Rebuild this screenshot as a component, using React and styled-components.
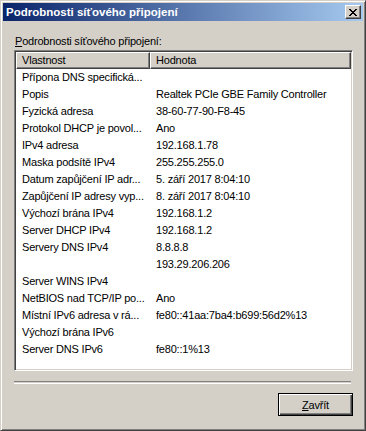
import React from 'react';
import styled, { createGlobalStyle } from 'styled-components';

const GlobalStyle = createGlobalStyle`
  html, body {
    margin: 0;
    padding: 0;
    background: #d4d0c8;
  }
  body {
    font-family: "Liberation Sans", Arial, sans-serif;
    font-size: 11px;
    letter-spacing: -0.2px;
    color: #000;
  }
`;

const Window = styled.div`
  width: 366px;
  height: 431px;
  box-sizing: border-box;
  background: #d4d0c8;
  border: 1px solid;
  border-color: #d4d0c8 #404040 #404040 #d4d0c8;
  box-shadow: inset 1px 1px #fff, inset -1px -1px #808080;
  padding: 2px;
  display: flex;
  flex-direction: column;
`;

const TitleBar = styled.div`
  height: 18px;
  display: flex;
  align-items: center;
  justify-content: space-between;
  padding: 0 2px 0 3px;
  background: linear-gradient(to right, #0a246a, #a6caf0);
  color: #fff;
  font-weight: bold;
  font-size: 11.5px;
  letter-spacing: 0;
`;

const CloseButton = styled.div`
  width: 16px;
  height: 14px;
  box-sizing: border-box;
  background: #d4d0c8;
  border: 1px solid;
  border-color: #fff #404040 #404040 #fff;
  box-shadow: inset -1px -1px #808080;
  display: flex;
  align-items: center;
  justify-content: center;
`;

const Body = styled.div`
  flex: 1;
  display: flex;
  flex-direction: column;
  padding: 14px 10px 0 11px;
`;

const Label = styled.div`
  line-height: 13px;
  height: 15px;
  padding-left: 1px;
`;

const Mnemonic = styled.span`
  text-decoration: underline;
`;

const ListBox = styled.div`
  height: 321px;
  box-sizing: border-box;
  background: #fff;
  border: 1px solid;
  border-color: #808080 #fff #fff #808080;
  box-shadow: inset 1px 1px #404040, inset -1px -1px #d4d0c8;
  padding: 1px;
  overflow: hidden;
`;

const Header = styled.div`
  display: flex;
  height: 17px;
`;

const HeaderCell = styled.div`
  width: ${p => p.$width}px;
  flex: ${p => (p.$grow ? 1 : 'none')};
  box-sizing: border-box;
  background: #d4d0c8;
  border: 1px solid;
  border-color: #fff #404040 #404040 #fff;
  box-shadow: inset -1px -1px #808080;
  padding-left: 5px;
  line-height: 14px;
  white-space: nowrap;
  overflow: hidden;
`;

const Row = styled.div`
  display: flex;
  height: 17px;
  line-height: 17px;
  white-space: nowrap;
`;

const Cell = styled.div`
  width: ${p => p.$width}px;
  flex: ${p => (p.$grow ? 1 : 'none')};
  box-sizing: border-box;
  padding-left: 6px;
  overflow: hidden;
`;

const Separator = styled.div`
  margin-top: 10px;
  height: 1px;
  border-top: 1px solid #808080;
  border-bottom: 1px solid #fff;
  margin-right: 2px;
`;

const ButtonRow = styled.div`
  display: flex;
  justify-content: flex-end;
  margin-top: 9px;
`;

const Button = styled.div`
  width: 75px;
  height: 23px;
  box-sizing: border-box;
  border: 1px solid #000;
  background: #d4d0c8;
  box-shadow: inset 1px 1px #fff, inset -1px -1px #404040, inset -2px -2px #808080;
  display: flex;
  align-items: center;
  justify-content: center;
`;

const rows = [
  ['Přípona DNS specifická...', ''],
  ['Popis', 'Realtek PCIe GBE Family Controller'],
  ['Fyzická adresa', '38-60-77-90-F8-45'],
  ['Protokol DHCP je povol...', 'Ano'],
  ['IPv4 adresa', '192.168.1.78'],
  ['Maska podsítě IPv4', '255.255.255.0'],
  ['Datum zapůjčení IP adr...', '5. září 2017 8:04:10'],
  ['Zapůjčení IP adresy vyp...', '8. září 2017 8:04:10'],
  ['Výchozí brána IPv4', '192.168.1.2'],
  ['Server DHCP IPv4', '192.168.1.2'],
  ['Servery DNS IPv4', '8.8.8.8'],
  ['', '193.29.206.206'],
  ['Server WINS IPv4', ''],
  ['NetBIOS nad TCP/IP po...', 'Ano'],
  ['Místní IPv6 adresa v rá...', 'fe80::41aa:7ba4:b699:56d2%13'],
  ['Výchozí brána IPv6', ''],
  ['Server DNS IPv6', 'fe80::1%13'],
];

const App = () => {
  return (
    <>
      <GlobalStyle />
      <Window>
        <TitleBar>
          <span>Podrobnosti síťového připojení</span>
          <CloseButton>
            <svg width="8" height="7" viewBox="0 0 8 7" shapeRendering="crispEdges">
              <path d="M0 0h2v1h-2zM6 0h2v1h-2zM1 1h2v1h-2zM5 1h2v1h-2zM2 2h4v1h-4zM3 3h2v1h-2zM2 4h4v1h-4zM1 5h2v1h-2zM5 5h2v1h-2zM0 6h2v1h-2zM6 6h2v1h-2z" fill="#000" />
            </svg>
          </CloseButton>
        </TitleBar>
        <Body>
          <Label><Mnemonic>P</Mnemonic>odrobnosti síťového připojení:</Label>
          <ListBox>
            <Header>
              <HeaderCell $width={134}>Vlastnost</HeaderCell>
              <HeaderCell $grow>Hodnota</HeaderCell>
            </Header>
            {rows.map(([name, value], i) => (
              <Row key={i}>
                <Cell $width={134}>{name}</Cell>
                <Cell $grow>{value}</Cell>
              </Row>
            ))}
          </ListBox>
          <Separator />
          <ButtonRow>
            <Button><span><Mnemonic>Z</Mnemonic>avřít</span></Button>
          </ButtonRow>
        </Body>
      </Window>
    </>
  );
};

export default App;
